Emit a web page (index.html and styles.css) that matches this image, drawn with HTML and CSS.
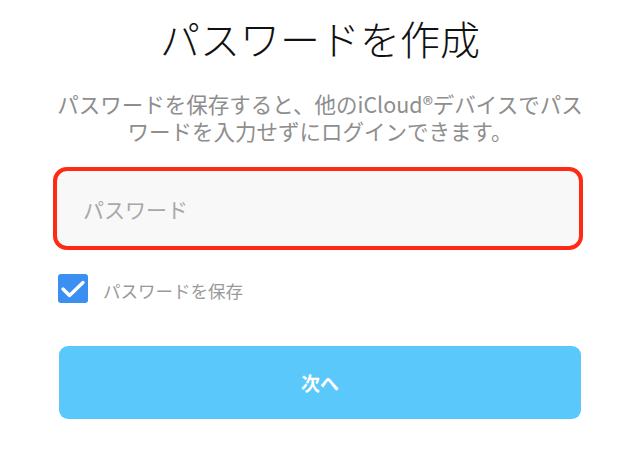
FILE: index.html
```html
<!DOCTYPE html>
<html lang="ja">
<head>
<meta charset="utf-8">
<title>パスワードを作成</title>
<link rel="stylesheet" href="styles.css">
</head>
<body>
<main class="page">
  <h1 class="title">パスワードを作成</h1>
  <p class="desc">パスワードを保存すると、他のiCloud®デバイスでパス<br>ワードを入力せずにログインできます。</p>
  <div class="field"><span class="placeholder">パスワード</span></div>
  <label class="save">
    <span class="check">
      <svg width="30" height="29" viewBox="0 0 30 29"><path d="M5 15 L11.5 21.5 L25 8.5" fill="none" stroke="#fff" stroke-width="3.4" stroke-linecap="round" stroke-linejoin="round"/></svg>
    </span>
    <span class="save-text">パスワードを保存</span>
  </label>
  <div class="next">次へ</div>
</main>
</body>
</html>
```
FILE: styles.css
```css
html, body {
  margin: 0;
  padding: 0;
  background: #ffffff;
}
body {
  width: 640px;
  height: 468px;
  overflow: hidden;
  font-family: "Noto Sans CJK JP", "Noto Sans", sans-serif;
}
.page {
  display: flex;
  flex-direction: column;
  padding-top: 14px;
}
.title {
  margin: 0;
  font-size: 40px;
  line-height: 48px;
  font-weight: 300;
  color: #111;
  text-align: center;
  letter-spacing: 0;
}
.desc {
  margin: 28px 0 0;
  font-size: 21.5px;
  line-height: 27px;
  color: #8e8e8e;
  text-align: center;
  font-weight: 400;
}
.field {
  margin: 23px 57px 0 53px;
  height: 83px;
  box-sizing: border-box;
  border: 4px solid #ff2a14;
  border-radius: 14px;
  background: #f8f8f8;
  display: flex;
  align-items: center;
  padding-left: 26px;
}
.placeholder {
  font-size: 21px;
  color: #a8a8a8;
}
.save {
  margin: 24px 0 0 58px;
  display: flex;
  align-items: center;
  gap: 15px;
}
.check {
  width: 30px;
  height: 29px;
  border-radius: 3px;
  background: #3a8ff0;
  display: flex;
  align-items: center;
  justify-content: center;
}
.check svg {
  display: block;
}
.save-text {
  font-size: 17.5px;
  color: #9a9a9a;
  margin-top: 4px;
}
.next {
  margin: 43px 59px 0 59px;
  height: 73px;
  border-radius: 9px;
  background: #5ac8fa;
  color: #ffffff;
  font-size: 19px;
  font-weight: 700;
  display: flex;
  align-items: center;
  justify-content: center;
}
```
